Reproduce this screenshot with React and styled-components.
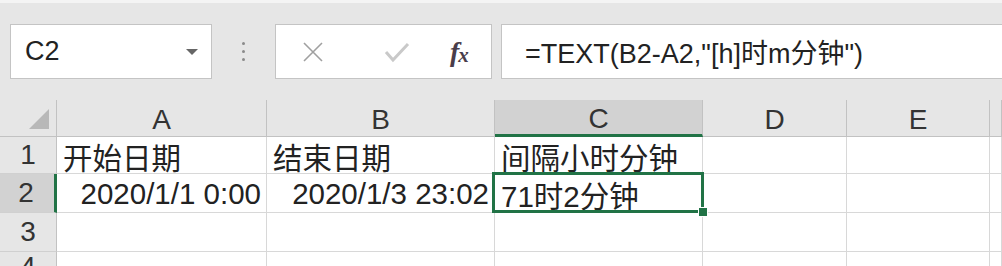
import styled, { createGlobalStyle } from "styled-components";

const GlobalStyle = createGlobalStyle`
  body {
    margin: 0;
    background: #ffffff;
    font-family: "Liberation Sans", "Noto Sans CJK SC", sans-serif;
    overflow: hidden;
  }
`;

const Page = styled.div`
  width: 1002px;
  height: 266px;
  overflow: hidden;
  background: #ffffff;
`;

const Toolbar = styled.div`
  height: 100px;
  box-sizing: border-box;
  border-top: 3px solid #f4f4f4;
  background: #e6e6e6;
  padding: 21px 0 0 10px;
  display: flex;
  align-items: flex-start;
`;

const NameBox = styled.div`
  width: 202px;
  height: 55px;
  box-sizing: border-box;
  background: #ffffff;
  border: 1px solid #c4c4c4;
  display: flex;
  align-items: center;
  justify-content: space-between;
  padding: 0 13px 0 14px;
  font-size: 27px;
  color: #222;
`;

const Caret = styled.span`
  width: 0;
  height: 0;
  border-left: 6px solid transparent;
  border-right: 6px solid transparent;
  border-top: 6px solid #666;
`;

const Grip = styled.div`
  width: 63px;
  height: 55px;
  display: flex;
  flex-direction: column;
  align-items: center;
  justify-content: center;
  gap: 5px;
  span {
    width: 3px;
    height: 3px;
    border-radius: 50%;
    background: #8a8a8a;
  }
`;

const ButtonBox = styled.div`
  width: 217px;
  height: 55px;
  box-sizing: border-box;
  background: #ffffff;
  border: 1px solid #c4c4c4;
  display: flex;
  align-items: center;
  padding: 0 0 0 26px;
`;

const IconSlot = styled.span`
  width: ${(p) => p.$w}px;
  display: flex;
  align-items: center;
`;

const Fx = styled.span`
  font-family: "Liberation Serif", serif;
  font-style: italic;
  font-weight: bold;
  font-size: 28px;
  color: #4a3d4a;
  letter-spacing: -1px;
  line-height: 1;
  sub {
    font-size: 21px;
    vertical-align: -1px;
  }
`;

const FormulaBox = styled.div`
  flex: 1;
  height: 55px;
  margin-left: 9px;
  box-sizing: border-box;
  background: #ffffff;
  border: 1px solid #c4c4c4;
  border-right: none;
  display: flex;
  align-items: center;
  padding-left: 23px;
  font-size: 27px;
  color: #222;
  white-space: nowrap;
`;

const Grid = styled.div`
  display: grid;
  grid-template-columns: 57px 210px 228px 208px 144px 143px 1fr;
  grid-template-rows: 37px 37px 39px 39px 30px;
`;

const Corner = styled.div`
  background: #e6e6e6;
  border-right: 1px solid #c2c2c2;
  border-bottom: 1px solid #c2c2c2;
  box-sizing: border-box;
  display: flex;
  align-items: flex-end;
  justify-content: flex-end;
  padding: 0 7px 7px 0;
`;

const ColHead = styled.div`
  box-sizing: border-box;
  background: ${(p) => (p.$active ? "#d2d2d2" : "#e6e6e6")};
  border-right: 1px solid #c2c2c2;
  border-bottom: ${(p) => (p.$active ? "3px solid #217346" : "1px solid #c2c2c2")};
  display: flex;
  align-items: center;
  justify-content: center;
  padding-top: 4px;
  font-size: 28px;
  color: #333;
`;

const RowHead = styled.div`
  box-sizing: border-box;
  background: ${(p) => (p.$active ? "#d2d2d2" : "#e6e6e6")};
  border-right: ${(p) => (p.$active ? "3px solid #217346" : "1px solid #c2c2c2")};
  border-bottom: 1px solid #d0d0d0;
  display: flex;
  align-items: center;
  justify-content: center;
  padding-right: ${(p) => (p.$active ? "2px" : "0")};
  font-size: 28px;
  color: #333;
`;

const Cell = styled.div`
  position: relative;
  box-sizing: border-box;
  border-right: 1px solid #d8d8d8;
  border-bottom: 1px solid #d8d8d8;
  display: flex;
  align-items: center;
  justify-content: ${(p) => (p.$right ? "flex-end" : "flex-start")};
  padding: ${(p) => (p.$right ? "2px 5px 0 0" : "2px 0 0 6px")};
  font-size: 29.5px;
  color: #222;
  white-space: nowrap;
`;

const Selection = styled.div`
  position: absolute;
  z-index: 5;
  left: -3px;
  top: -2px;
  right: -2px;
  bottom: -1px;
  border: 3px solid #217346;
  pointer-events: none;
`;

const Handle = styled.div`
  position: absolute;
  right: -7px;
  bottom: -7px;
  width: 8px;
  height: 8px;
  background: #217346;
  border: 1px solid #ffffff;
`;

const columns = ["A", "B", "C", "D", "E", ""];

const rows = [
  { n: "1", cells: [{ t: "开始日期" }, { t: "结束日期" }, { t: "间隔小时分钟" }, {}, {}, {}] },
  {
    n: "2",
    active: true,
    cells: [
      { t: "2020/1/1 0:00", right: true },
      { t: "2020/1/3 23:02", right: true },
      { t: "71时2分钟", selected: true },
      {},
      {},
      {},
    ],
  },
  { n: "3", cells: [{}, {}, {}, {}, {}, {}] },
  { n: "4", cells: [{}, {}, {}, {}, {}, {}] },
];

export default function App() {
  return (
    <Page>
      <GlobalStyle />
      <Toolbar>
        <NameBox>
          <span>C2</span>
          <Caret />
        </NameBox>
        <Grip>
          <span />
          <span />
          <span />
        </Grip>
        <ButtonBox>
          <IconSlot $w={82}>
            <svg width="22" height="22" viewBox="0 0 22 22">
              <path d="M2 2 L20 20 M20 2 L2 20" stroke="#a0a0a0" strokeWidth="1.6" fill="none" />
            </svg>
          </IconSlot>
          <IconSlot $w={66}>
            <svg width="26" height="22" viewBox="0 0 26 22">
              <path d="M2 11 L9 19 L24 3" stroke="#c9c9c9" strokeWidth="3" fill="none" />
            </svg>
          </IconSlot>
          <IconSlot $w={40}>
            <Fx>
              f<sub>x</sub>
            </Fx>
          </IconSlot>
        </ButtonBox>
        <FormulaBox>=TEXT(B2-A2,"[h]时m分钟")</FormulaBox>
      </Toolbar>
      <Grid>
        <Corner>
          <svg width="20" height="20" viewBox="0 0 20 20">
            <path d="M20 0 L20 20 L0 20 Z" fill="#b8b8b8" />
          </svg>
        </Corner>
        {columns.map((c, i) => (
          <ColHead key={i} $active={c === "C"}>
            {c}
          </ColHead>
        ))}
        {rows.map((r) => [
          <RowHead key={"h" + r.n} $active={r.active}>
            {r.n}
          </RowHead>,
          ...r.cells.map((cell, i) => (
            <Cell key={r.n + "-" + i} $right={cell.right}>
              {cell.t}
              {cell.selected && (
                <Selection>
                  <Handle />
                </Selection>
              )}
            </Cell>
          )),
        ])}
      </Grid>
    </Page>
  );
}
